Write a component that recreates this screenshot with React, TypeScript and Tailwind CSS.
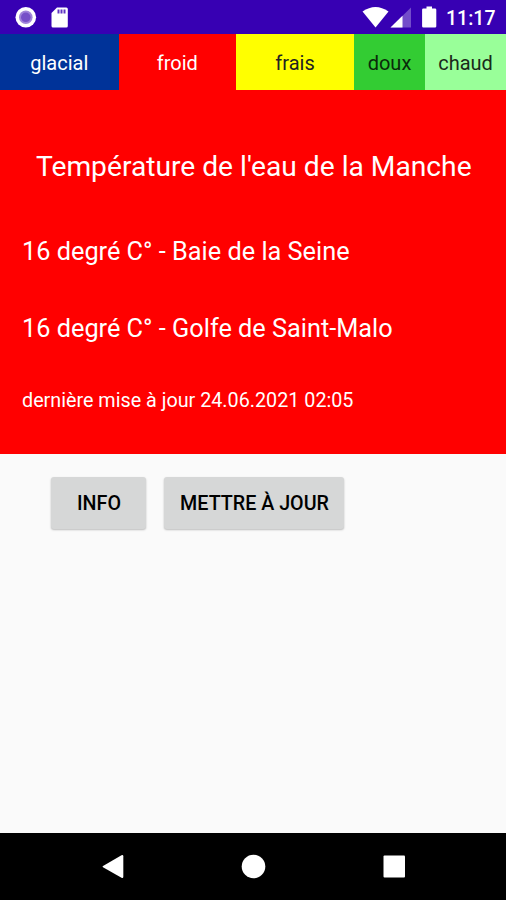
const tabs = [
  { label: "glacial", style: "w-[118.5px] bg-[#003399] text-white" },
  { label: "froid", style: "w-[117.5px] bg-[#ff0000] text-white" },
  { label: "frais", style: "w-[118px] bg-[#ffff00] text-[#222]" },
  { label: "doux", style: "w-[71px] bg-[#33cc33] text-[#0a2a0a]" },
  { label: "chaud", style: "w-[81px] bg-[#99ff99] text-[#1a2a1a]" },
];

const StatusBar = () => (
  <header className="flex h-[34px] items-center justify-between bg-[#3700b3] pr-[10px] text-white">
    {/* Notification icons */}
    <svg width="80" height="34" viewBox="0 0 80 34" fill="white">
      <circle cx="25.8" cy="17.3" r="10.3" />
      <circle cx="25.8" cy="17.3" r="6.8" fill="#9f83da" />
      <circle cx="25.8" cy="17.3" r="4.8" fill="#7650c8" />
      <path d="M57 7.5h9.3q1.5 0 1.5 1.5v17q0 1.5-1.5 1.5H53q-1.5 0-1.5-1.5V13z" />
      <path d="M57.5 9.5h2v4h-2zM60.5 9.5h2v4h-2zM63.5 9.5h2v4h-2z" fill="#3700b3" opacity=".8" />
    </svg>
    {/* Wifi, signal, battery and time */}
    <div className="flex items-center">
      <svg width="86" height="34" viewBox="360 0 86 34" fill="white">
        <path d="M362.5 11.5q13-9 26 0L375.5 27.5z" />
        <path d="M411 7.5v20h-20.5z" opacity=".3" />
        <path d="M402.5 15.8v11.7h-12z" />
        <path d="M426.5 6.5h5.5v2h3q1.3 0 1.3 1.3v16.4q0 1.3-1.3 1.3h-11.6q-1.3 0-1.3-1.3V9.8q0-1.3 1.3-1.3h3.1z" />
      </svg>
      <span className="mt-[3px] w-[50px] whitespace-nowrap text-[19.5px] font-medium">11:17</span>
    </div>
  </header>
);

const App = () => (
  <div className="flex h-[900px] w-[506px] flex-col bg-[#fafafa] font-['Roboto',sans-serif]">
    <StatusBar />
    <nav className="flex h-14 bg-[#ff0000]">
      {tabs.map((tab) => (
        <div key={tab.label} className={`flex h-[55.5px] items-center justify-center pt-[3px] text-[20px] ${tab.style}`}>
          {tab.label}
        </div>
      ))}
    </nav>
    <main className="h-[364px] bg-[#ff0000] pl-[22px] pt-[59px] text-white">
      <h1 className="ml-[14px] text-[28.2px] leading-9">Température de l'eau de la Manche</h1>
      <p className="mt-[49px] text-[25.3px] leading-9">16 degré C° - Baie de la Seine</p>
      <p className="mt-[41px] text-[25.3px] leading-9">16 degré C° - Golfe de Saint-Malo</p>
      <p className="mt-[36px] text-[19.75px] leading-9">dernière mise à jour 24.06.2021 02:05</p>
    </main>
    <div className="flex flex-1 items-start gap-[18px] pl-[51px] pt-[23px]">
      <button className="h-[52px] w-[95px] rounded-[3px] bg-[#d6d7d7] pl-px pt-[2px] text-[19.7px] font-medium shadow-[0_1px_2px_rgba(0,0,0,0.25)]">
        INFO
      </button>
      <button className="h-[52px] w-[180px] rounded-[3px] bg-[#d6d7d7] pl-px pt-[2px] text-[19.7px] font-medium shadow-[0_1px_2px_rgba(0,0,0,0.25)]">
        METTRE À JOUR
      </button>
    </div>
    <footer className="h-[67px] bg-black">
      <svg width="506" height="67" viewBox="0 0 506 67" fill="white">
        <path d="M103 33.1 121.5 22.3q1.8-.8 1.8 1v20.4q0 1.8-1.8 1L103 34.3q-1-.6 0-1.200z" />
        <circle cx="253.5" cy="33.5" r="11.8" />
        <rect x="383.5" y="22.5" width="21.5" height="22" rx="1" />
      </svg>
    </footer>
  </div>
);

export default App;
